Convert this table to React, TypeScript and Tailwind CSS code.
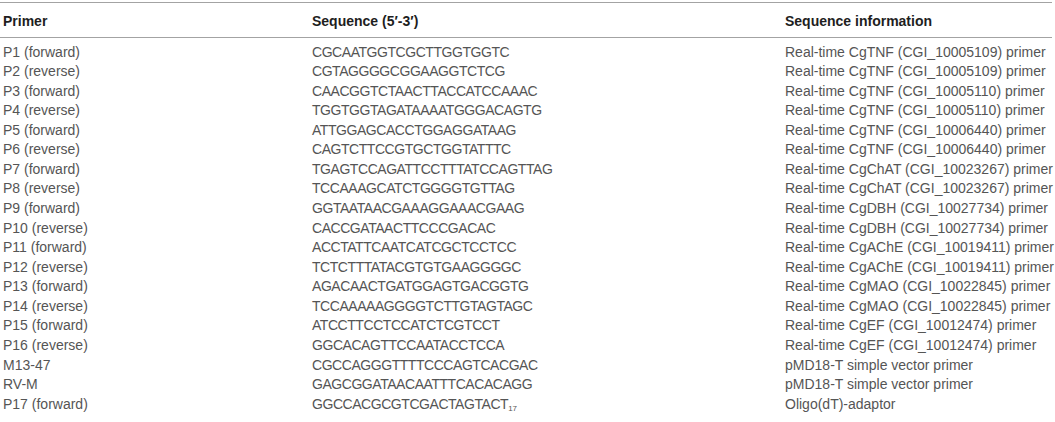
import React from "react";

const rows: { primer: string; seq: string; sub?: string; info: string }[] = [
  { primer: "P1 (forward)", seq: "CGCAATGGTCGCTTGGTGGTC", info: "Real-time CgTNF (CGI_10005109) primer" },
  { primer: "P2 (reverse)", seq: "CGTAGGGGCGGAAGGTCTCG", info: "Real-time CgTNF (CGI_10005109) primer" },
  { primer: "P3 (forward)", seq: "CAACGGTCTAACTTACCATCCAAAC", info: "Real-time CgTNF (CGI_10005110) primer" },
  { primer: "P4 (reverse)", seq: "TGGTGGTAGATAAAATGGGACAGTG", info: "Real-time CgTNF (CGI_10005110) primer" },
  { primer: "P5 (forward)", seq: "ATTGGAGCACCTGGAGGATAAG", info: "Real-time CgTNF (CGI_10006440) primer" },
  { primer: "P6 (reverse)", seq: "CAGTCTTCCGTGCTGGTATTTC", info: "Real-time CgTNF (CGI_10006440) primer" },
  { primer: "P7 (forward)", seq: "TGAGTCCAGATTCCTTTATCCAGTTAG", info: "Real-time CgChAT (CGI_10023267) primer" },
  { primer: "P8 (reverse)", seq: "TCCAAAGCATCTGGGGTGTTAG", info: "Real-time CgChAT (CGI_10023267) primer" },
  { primer: "P9 (forward)", seq: "GGTAATAACGAAAGGAAACGAAG", info: "Real-time CgDBH (CGI_10027734) primer" },
  { primer: "P10 (reverse)", seq: "CACCGATAACTTCCCGACAC", info: "Real-time CgDBH (CGI_10027734) primer" },
  { primer: "P11 (forward)", seq: "ACCTATTCAATCATCGCTCCTCC", info: "Real-time CgAChE (CGI_10019411) primer" },
  { primer: "P12 (reverse)", seq: "TCTCTTTATACGTGTGAAGGGGC", info: "Real-time CgAChE (CGI_10019411) primer" },
  { primer: "P13 (forward)", seq: "AGACAACTGATGGAGTGACGGTG", info: "Real-time CgMAO (CGI_10022845) primer" },
  { primer: "P14 (reverse)", seq: "TCCAAAAAGGGGTCTTGTAGTAGC", info: "Real-time CgMAO (CGI_10022845) primer" },
  { primer: "P15 (forward)", seq: "ATCCTTCCTCCATCTCGTCCT", info: "Real-time CgEF (CGI_10012474) primer" },
  { primer: "P16 (reverse)", seq: "GGCACAGTTCCAATACCTCCA", info: "Real-time CgEF (CGI_10012474) primer" },
  { primer: "M13-47", seq: "CGCCAGGGTTTTCCCAGTCACGAC", info: "pMD18-T simple vector primer" },
  { primer: "RV-M", seq: "GAGCGGATAACAATTTCACACAGG", info: "pMD18-T simple vector primer" },
  { primer: "P17 (forward)", seq: "GGCCACGCGTCGACTAGTACT", sub: "17", info: "Oligo(dT)-adaptor" },
];

export default function App() {
  return (
    <div className="w-[1055px] h-[422px] overflow-hidden bg-white pt-[2px] font-['Liberation_Sans',Arial,sans-serif]">
      <table className="w-[1052px] table-fixed border-collapse text-[14px]">
        <colgroup>
          <col className="w-[312px]" />
          <col className="w-[473px]" />
          <col />
        </colgroup>
        <thead>
          <tr className="border-t border-b border-[#a3a3a3] h-[35px]">
            <th className="pl-[3px] pt-[3px] text-left font-bold text-[#1e1e1e]">Primer</th>
            <th className="pt-[3px] text-left font-bold text-[#1e1e1e]">Sequence (5′-3′)</th>
            <th className="pt-[3px] text-left font-bold text-[#1e1e1e]">Sequence information</th>
          </tr>
        </thead>
        <tbody className="text-[#555555]">
          <tr className="h-[5px]" />
          {rows.map((r) => (
            <tr key={r.primer} className="h-[19.56px] leading-[19.56px]">
              <td className="pl-[3px] whitespace-nowrap">{r.primer}</td>
              <td className="whitespace-nowrap tracking-[-0.45px]">
                {r.seq}
                {r.sub && <sub className="text-[8px] tracking-normal align-baseline">{r.sub}</sub>}
              </td>
              <td className="whitespace-nowrap">{r.info}</td>
            </tr>
          ))}
        </tbody>
      </table>
    </div>
  );
}
